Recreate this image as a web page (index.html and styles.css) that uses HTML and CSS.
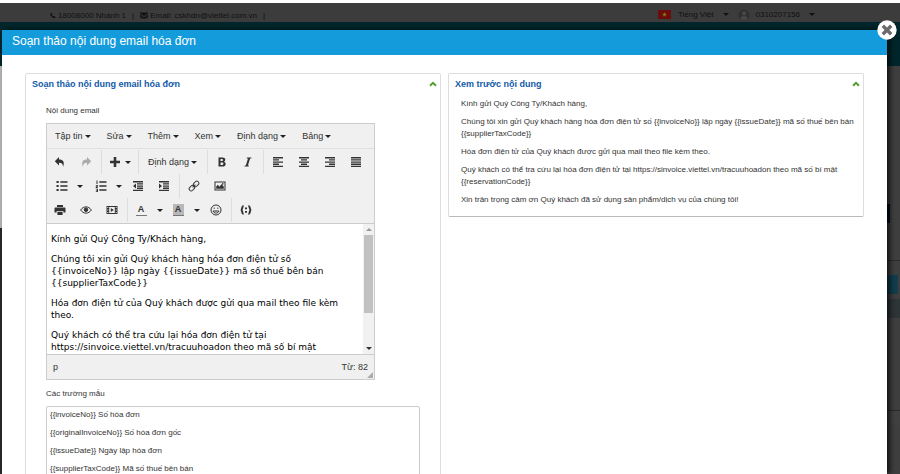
FILE: index.html
```html
<!DOCTYPE html>
<html lang="vi">
<head>
<meta charset="utf-8">
<meta name="viewport" content="width=device-width, initial-scale=1">
<title>Soạn thảo nội dung email hóa đơn</title>
<link rel="stylesheet" href="styles.css">
</head>
<body>
<div class="page">
  <header class="topbar">
    <div class="contact">
      <svg class="i-phone" viewBox="0 0 12 12"><path d="M1 2.200 3 .6l2 2.800-1.300 1.300c.6 1.500 1.700 2.700 3.400 3.500L8.400 7l2.900 1.900-1.400 2.200C5.300 12 .2 7 1 2.200z"/></svg>
      <span>18008000 Nhánh 1</span><span class="bar">|</span>
      <svg class="i-mail" viewBox="0 0 16 12"><path d="M0 0h16v1.500L8 7 0 1.500zM0 3.500l5 3.300L0 11zM16 3.500V11l-5-4.200zM1 12l5-4.500 2 1.300 2-1.300 5 4.500z"/></svg>
      <span>Email: cskhdn@viettel.com.vn</span><span class="bar">|</span>
    </div>
    <div class="account">
      <svg class="flag" viewBox="0 0 13 9"><path fill="#6b0d0a" d="M0 0h13v9H0z"/><path fill="#8a7a10" d="m6.500 2 .6 1.800H9L7.500 4.900 8 6.700 6.500 5.600 5 6.700l.5-1.800L4 3.800h1.900z"/></svg>
      <span class="lang">Tiếng Việt</span><i class="caret"></i>
      <svg class="avatar" viewBox="0 0 12 12"><circle cx="6" cy="6" r="5.500" fill="#303030"/><circle cx="6" cy="4.500" r="2" fill="#484848"/><path fill="#484848" d="M2.500 10c0-4 7-4 7 0-2 1.500-5 1.500-7 0z"/></svg>
      <span class="user">0310207156</span><i class="caret"></i>
    </div>
  </header>
  <div class="nav"></div>
  <div class="backdrop">
    <div class="edge-left"></div>
    <div class="edge-right"><i class="navy"></i><i class="rule"></i><i class="teal"></i><i class="band"></i><i class="rule low"></i><i class="band foot"></i></div>
  </div>
</div>

<section class="modal" role="dialog" aria-labelledby="dialog-title">
  <h1 class="modal-title" id="dialog-title">Soạn thảo nội dung email hóa đơn</h1>
  <button class="close" type="button" aria-label="Đóng"><svg viewBox="0 0 20 20"><circle cx="10" cy="10" r="9.700" fill="#fff"/><path d="m5.800 5.800 8.400 8.400m0-8.400-8.400 8.400" stroke="#6b6b6b" stroke-width="3.400"/></svg></button>
  <div class="columns">
    <section class="panel compose">
      <header class="panel-head"><h2>Soạn thảo nội dung email hóa đơn</h2>
        <button class="fold" type="button" aria-label="Thu gọn"><svg viewBox="0 0 8 6"><path d="m1 4.800 3-3 3 3"/></svg></button></header>
      <div class="compose-body">
        <p class="label" id="body-label">Nội dung email</p>
        <div class="editor">
          <div class="menubar">
            <button type="button">Tập tin<i class="caret"></i></button>
            <button type="button">Sửa<i class="caret"></i></button>
            <button type="button">Thêm<i class="caret"></i></button>
            <button type="button">Xem<i class="caret"></i></button>
            <button type="button">Định dạng<i class="caret"></i></button>
            <button type="button">Bảng<i class="caret"></i></button>
          </div>
          <div class="toolbar">
            <div class="row">
              <div class="group">
                <button class="tool" type="button" aria-label="Hoàn tác"><svg viewBox="0 0 12 12"><path d="M5 1v2.600c4 0 6 2.400 4 7.400 0-3-1-4.200-4-4.200v2.700L.8 5.300z"/></svg></button>
                <button class="tool faded" type="button" aria-label="Làm lại"><svg viewBox="0 0 12 12"><path d="M7 1v2.600C3 3.600 1 6 3 11c0-3 1-4.200 4-4.200v2.700l4.200-4.200z"/></svg></button>
              </div>
              <div class="group">
                <button class="insert" type="button" aria-label="Chèn"><svg viewBox="0 0 12 12"><path d="M4.700 1h2.600v3.700H11v2.600H7.300V11H4.700V7.300H1V4.700h3.700z"/></svg><i class="caret"></i></button>
              </div>
              <div class="group">
                <button class="format" type="button">Định dạng<i class="caret"></i></button>
              </div>
              <div class="group">
                <button class="tool" type="button" aria-label="Đậm"><svg viewBox="0 0 12 12"><path fill-rule="evenodd" d="M2.500 1.500h4c3.400 0 3.500 3.400 1.500 4.200 2.600.8 2.200 4.800-1.300 4.800H2.500zm2 1.600v2h1.400c1.600 0 1.600-2 0-2zm0 3.500v2.300h1.700c1.700 0 1.700-2.300 0-2.300z"/></svg></button>
                <button class="tool" type="button" aria-label="Nghiêng"><svg viewBox="0 0 12 12"><path d="M5 1.500h4.500l-.3 1H8.100L5.900 9.500H7l-.3 1H2.500l.3-1h1l2.200-7H4.700z"/></svg></button>
              </div>
              <div class="group">
                <button class="tool" type="button" aria-label="Căn trái"><svg viewBox="0 0 12 12"><path d="M1 1h10v1.400H1zm0 2.200h6v1.400H1zm0 2.200h10v1.400H1zm0 2.200h6V9H1zm0 2.100h10v1.400H1z"/></svg></button>
                <button class="tool" type="button" aria-label="Căn giữa"><svg viewBox="0 0 12 12"><path d="M1 1h10v1.400H1zm2 2.200h6v1.400H3zM1 5.400h10v1.400H1zm2 2.200h6V9H3zM1 9.700h10v1.400H1z"/></svg></button>
                <button class="tool" type="button" aria-label="Căn phải"><svg viewBox="0 0 12 12"><path d="M1 1h10v1.400H1zm4 2.200h6v1.400H5zM1 5.400h10v1.400H1zm4 2.200h6V9H5zM1 9.700h10v1.400H1z"/></svg></button>
                <button class="tool" type="button" aria-label="Căn đều"><svg viewBox="0 0 12 12"><path d="M1 1h10v1.400H1zm0 2.200h10v1.400H1zm0 2.200h10v1.400H1zm0 2.200h10V9H1zm0 2.100h10v1.400H1z"/></svg></button>
              </div>
            </div>
            <div class="row">
              <div class="group">
                <button class="tool list" type="button" aria-label="Danh sách"><svg viewBox="0 0 12 12"><path d="M.5 1h2.200v2H.5zm0 4h2.200v2H.5zm0 4h2.200v2H.5zM4.300 1.300h7.200v1.400H4.300zm0 4h7.200v1.400H4.300zm0 4h7.200v1.400H4.300z"/></svg></button><button class="drop" type="button" aria-label="Kiểu danh sách"><i class="caret"></i></button>
                <button class="tool list" type="button" aria-label="Danh sách số"><svg viewBox="0 0 12 12"><path d="M1.500.4h1V4h-1zM.8 5h2.100v1.500l-1 .7h1V8H.7V6.800l1.200-.7v-.4H.8zm0 3.800h2.200V12H.8v-.7h1.300v-.6H1.200v-.6h.9v-.6H.8zM4.300 1.300h7.200v1.400H4.300zm0 4h7.200v1.400H4.300zm0 4h7.200v1.400H4.300z"/></svg></button><button class="drop" type="button" aria-label="Kiểu đánh số"><i class="caret"></i></button>
                <button class="tool" type="button" aria-label="Giảm thụt lề"><svg viewBox="0 0 12 12"><path d="M1 1h10v1.400H1zm4 2.200h6v1.400H5zm0 2.200h6v1.400H5zm0 2.200h6V9H5zM1 9.700h10v1.400H1zM4 3.500v5L1 6z"/></svg></button>
                <button class="tool" type="button" aria-label="Tăng thụt lề"><svg viewBox="0 0 12 12"><path d="M1 1h10v1.400H1zm4 2.200h6v1.400H5zm0 2.200h6v1.400H5zm0 2.200h6V9H5zM1 9.700h10v1.400H1zM1 3.500v5L4 6z"/></svg></button>
              </div>
              <div class="group">
                <button class="tool" type="button" aria-label="Liên kết"><svg class="line" viewBox="0 0 12 12"><g transform="rotate(-45 6 6)"><rect x="0" y="4" width="6" height="4" rx="2"/><rect x="6" y="4" width="6" height="4" rx="2"/><path d="M4 6h4"/></g></svg></button>
                <button class="tool" type="button" aria-label="Hình ảnh"><svg viewBox="0 0 12 12"><path fill-rule="evenodd" d="M.5 1.500h11v9H.5zm1 1v7h9v-7z"/><path d="M2.200 8.800V6.500l1.700-1.700 1.500 2L7.700 4l2.100 2.700v2.100z"/><circle cx="8.800" cy="3.900" r=".8"/></svg></button>
              </div>
            </div>
            <div class="row">
              <div class="group">
                <button class="tool" type="button" aria-label="In"><svg viewBox="0 0 12 12"><path fill-rule="evenodd" d="M3 1h6v2H3zM1.500 3.600h9q1 0 1 1v4H9.400V7H2.600v1.600H.5v-4q0-1 1-1zM3.400 7.700h5.200V11H3.400z"/></svg></button>
                <button class="tool" type="button" aria-label="Xem trước"><svg class="line" viewBox="0 0 12 12"><path d="M.6 6c3-4.200 7.800-4.200 10.800 0-3 4.200-7.800 4.200-10.800 0z"/><circle cx="6" cy="5.700" r="1.800" fill="#333"/></svg></button>
                <button class="tool" type="button" aria-label="Đa phương tiện"><svg viewBox="0 0 12 12"><path fill-rule="evenodd" d="M.5 2h11v8H.5zm2.700 1v6h5.600V3zM1.300 3v1h1V3zm0 2.500v1h1v-1zm0 2.500v1h1V8zm8.400-5v1h1V3zm0 2.500v1h1v-1zm0 2.500v1h1V8z"/><path d="M4.800 4v4l3-2z"/></svg></button>
              </div>
              <div class="group">
                <button class="tool color" type="button" aria-label="Màu chữ"><span class="ink">A</span></button><button class="drop" type="button" aria-label="Chọn màu chữ"><i class="caret"></i></button>
                <button class="tool color" type="button" aria-label="Màu nền"><span class="ink filled">A</span></button><button class="drop" type="button" aria-label="Chọn màu nền"><i class="caret"></i></button>
                <button class="tool" type="button" aria-label="Biểu cảm"><svg class="line" viewBox="0 0 12 12"><circle cx="6" cy="6" r="5"/><path d="M3 7c1 2.700 5 2.700 6 0z"/><path d="M4.200 3.600v1.300m3.600-1.300v1.300"/></svg></button>
              </div>
              <div class="group">
                <button class="tool" type="button" aria-label="Mã mẫu"><svg class="line brace" viewBox="0 0 12 12"><path d="M3.600 2C1.500 2 3 5.700.9 6 3 6.300 1.500 10 3.600 10M8.400 2c2.100 0 .6 3.700 2.700 4-2.100.3-.6 4-2.700 4M6 3.500v1.800m0 1.700v1.800"/></svg></button>
              </div>
            </div>
          </div>
          <div class="edit-area">
            <div class="document" contenteditable="true" role="textbox" aria-multiline="true" aria-labelledby="body-label" spellcheck="false">
              <p>Kính gửi Quý Công Ty/Khách hàng,</p>
              <p>Chúng tôi xin gửi Quý khách hàng hóa đơn điện tử số {{invoiceNo}} lập ngày {{issueDate}} mã số thuế bên bán {{supplierTaxCode}}</p>
              <p>Hóa đơn điện tử của Quý khách được gửi qua mail theo file kèm theo.</p>
              <p>Quý khách có thể tra cứu lại hóa đơn điện tử tại https://sinvoice.viettel.vn/tracuuhoadon theo mã số bí mật</p>
            </div>
            <div class="scrollbar"><i class="caret up"></i><div class="thumb"></div><i class="caret"></i></div>
          </div>
          <div class="status"><span>p</span><span>Từ: 82</span>
            <svg class="grip" viewBox="0 0 8 8"><path d="M8 0v8H0z"/></svg></div>
        </div>
        <p class="label fields-label">Các trường mẫu</p>
        <div class="fields">
          <p>{{invoiceNo}} Số hóa đơn</p>
          <p>{{originalInvoiceNo}} Số hóa đơn gốc</p>
          <p>{{issueDate}} Ngày lập hóa đơn</p>
          <p>{{supplierTaxCode}} Mã số thuế bên bán</p>
        </div>
      </div>
    </section>
    <section class="panel preview">
      <header class="panel-head"><h2>Xem trước nội dung</h2>
        <button class="fold" type="button" aria-label="Thu gọn"><svg viewBox="0 0 8 6"><path d="m1 4.800 3-3 3 3"/></svg></button></header>
      <div class="preview-body">
        <p>Kính gửi Quý Công Ty/Khách hàng,</p>
        <p>Chúng tôi xin gửi Quý khách hàng hóa đơn điện tử số {{invoiceNo}} lập ngày {{issueDate}} mã số thuế bên bán {{supplierTaxCode}}</p>
        <p>Hóa đơn điện tử của Quý khách được gửi qua mail theo file kèm theo.</p>
        <p>Quý khách có thể tra cứu lại hóa đơn điện tử tại https://sinvoice.viettel.vn/tracuuhoadon theo mã số bí mật {{reservationCode}}</p>
        <p>Xin trân trọng cảm ơn Quý khách đã sử dụng sản phẩm/dịch vụ của chúng tôi!</p>
      </div>
    </section>
  </div>
</section>
</body>
</html>
```
FILE: styles.css
```css
* { box-sizing: border-box; }
html, body { height: 100%; }
body {
  margin: 0;
  overflow: hidden;
  position: relative;
  background: #fff;
  color: #333;
  font: 8px/12px "Liberation Sans", sans-serif;
}
p, h1, h2 { margin: 0; }
button {
  display: flex;
  align-items: center;
  justify-content: center;
  margin: 0;
  padding: 0;
  border: 0;
  background: none;
  color: inherit;
  font: inherit;
}
svg { display: block; flex: none; }
.caret {
  width: 0;
  height: 0;
  border: 3px solid transparent;
  border-top-color: currentColor;
  border-bottom: 0;
}
.caret.up { transform: rotate(180deg); color: #999; }

/* Dimmed page behind the dialog */
.page { display: flex; flex-direction: column; height: 100%; padding-top: 3px; }
.topbar {
  display: flex;
  justify-content: space-between;
  height: 19px;
  padding: 0 85px 0 50px;
  background: #3c3c3c;
  color: #101010;
}
.contact, .account { display: flex; align-items: center; }
.contact { padding-top: 6px; }
.account { padding-top: 4px; }
.topbar svg { fill: #101010; }
.i-phone { width: 6px; height: 7px; margin-right: 2px; }
.i-mail { width: 8px; height: 7px; margin-right: 2px; }
.bar { margin: 0 6px; }
.flag { width: 13px; height: 9px; margin-right: 7px; }
.lang { margin-right: 9px; }
.avatar { width: 12px; height: 12px; margin: 0 6px 0 9px; }
.user { margin-right: 9px; }
.nav { height: 44px; background: #00262b; }
.backdrop { display: flex; flex: 1; justify-content: space-between; background: #3b3b3b; }
.edge-left { width: 2px; background: linear-gradient(#b4b4b4 162px, #292929 162px); }
.edge-right {
  display: flex;
  flex-direction: column;
  width: 13px;
  background: #3e3e3e;
}
.edge-right .navy { width: 3px; height: 19px; margin-top: 138px; background: #020b1c; }
.edge-right .rule { height: 1px; margin-top: 37px; background: #2a2a2a; }
.edge-right .teal { width: 11px; height: 19px; margin-top: 14px; background: #123d4c; }
.edge-right .band { height: 19px; margin-top: 5px; background: #2e3536; }
.edge-right .rule.low { margin-top: 92px; }
.edge-right .band.foot { height: 14px; margin-top: 0; background: #404040; }

/* Dialog */
.modal {
  position: absolute;
  inset: 30px 13px 0 2px;
  background: #fff;
  box-shadow: 3px 0 5px rgba(0, 0, 0, .7);
}
.modal-title {
  height: 25px;
  padding: 0 10px;
  background: #149bdc;
  color: #fff;
  font-size: 12px;
  font-weight: 400;
  line-height: 23px;
}
.close { position: absolute; top: -10px; right: -10px; }
.close svg { width: 20px; height: 20px; }
.columns {
  display: grid;
  grid-template-columns: 1fr 1fr;
  gap: 7px;
  align-items: start;
  height: calc(100% - 25px);
  padding: 18px 23px 0;
  overflow: hidden;
}
.panel { border: 1px solid #ddd; border-radius: 2px; }
.preview { padding-bottom: 10px; border-bottom-color: #bbb; }
.panel-head {
  display: flex;
  align-items: center;
  justify-content: space-between;
  height: 20px;
  padding: 0 3px 0 6px;
}
.panel-head h2 { color: #125aa8; font-size: 9px; font-weight: 700; }
.fold svg { width: 8px; height: 6px; fill: none; stroke: #549e2f; stroke-width: 2; }
.compose { padding-bottom: 12px; }
.compose-body { padding: 11px 20px 0; }
.label { margin-bottom: 6px; }
.fields-label { margin-top: 8px; }
.preview-body { display: grid; gap: 6px; padding: 4px 6px 0 12px; }

/* Rich text editor */
.editor { width: 88%; border: 1px solid #ccc; background: #f0f0f0; }
.menubar { display: flex; height: 25px; border-bottom: 1px solid #e0e0e0; font-size: 9px; }
.menubar button { gap: 2px; padding: 0 8px; }
.menubar .caret, .toolbar .caret { border-width: 3px 3px 0; color: #222; }
.toolbar { padding: 1px 0; }
.row, .group { display: flex; }
.group { height: 24px; padding-right: 2px; }
.group + .group { padding-left: 1px; border-left: 1px solid #ddd; }
.tool { width: 26px; }
.tool svg, .insert svg { width: 12px; height: 12px; fill: #333; }
.tool.faded svg { fill: #aaa; }
.tool .line { fill: none; stroke: #333; stroke-width: 1; }
.tool .brace { stroke-width: 2; }
.tool.list { padding-left: 4px; }
.drop { width: 13px; }
.tool.color { width: 24px; }
.insert { width: 33px; gap: 4px; }
.format { gap: 2px; width: 65px; font-size: 9px; }
.ink {
  width: 11px;
  height: 12px;
  border-bottom: 1px solid #777;
  font-size: 9px;
  font-weight: 700;
  line-height: 11px;
  text-align: center;
}
.ink.filled { background: #b8b8b8; }
.edit-area {
  display: flex;
  height: 132px;
  border: solid #ccc;
  border-width: 1px 0;
  background: #fff;
}
.document {
  display: grid;
  flex: 1;
  gap: 8px;
  align-content: start;
  padding: 9px 4px 0;
  overflow: hidden;
  outline: 0;
  color: #000;
  font: 9px/12px "DejaVu Sans", sans-serif;
}
.scrollbar {
  display: flex;
  flex-direction: column;
  align-items: center;
  width: 11px;
  padding: 4px 1px;
  background: #f1f1f1;
}
.thumb { width: 9px; height: 78px; margin: 4px 0 auto; background: #c1c1c1; }
.status {
  position: relative;
  display: flex;
  align-items: center;
  justify-content: space-between;
  height: 24px;
  padding: 0 6px;
  font-size: 9px;
}
.grip { position: absolute; right: 1px; bottom: 1px; width: 6px; height: 6px; fill: #aaa; }
.fields {
  display: grid;
  gap: 6px;
  padding: 2px 3px;
  border: 1px solid #ccc;
  border-radius: 2px;
}
```
